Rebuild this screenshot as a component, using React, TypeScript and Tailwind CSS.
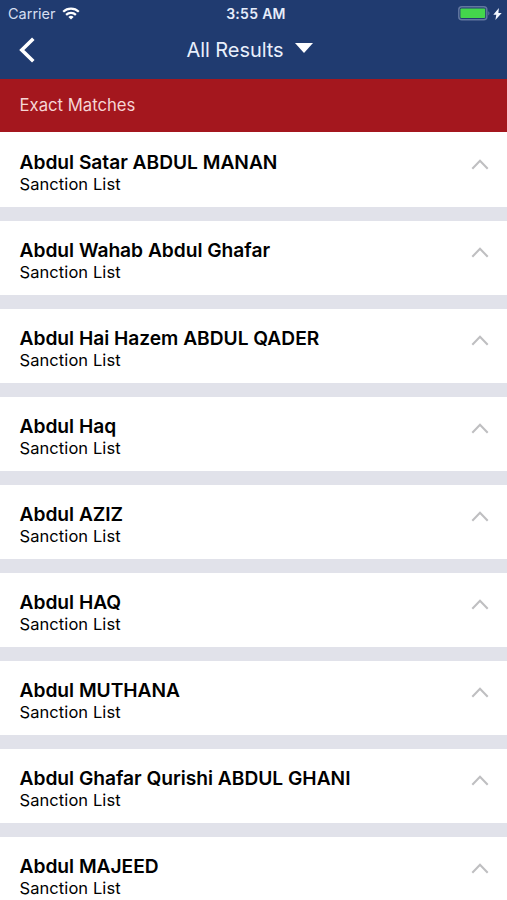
const names = [
  'Abdul Satar ABDUL MANAN',
  'Abdul Wahab Abdul Ghafar',
  'Abdul Hai Hazem ABDUL QADER',
  'Abdul Haq',
  'Abdul AZIZ',
  'Abdul HAQ',
  'Abdul MUTHANA',
  'Abdul Ghafar Qurishi ABDUL GHANI',
  'Abdul MAJEED',
];

function StatusBar() {
  return (
    <div className="grid h-[27px] grid-cols-3 items-center pl-2 pr-[5px]">
      <div className="flex items-center gap-[6px] text-[#d5def0]">
        <span className="text-[14.5px]">Carrier</span>
        <svg width="18" height="13" viewBox="0 0 18 13" fill="none" stroke="#fff" strokeWidth="2.2">
          <path d="M1.2 4.7a11.2 11.2 0 0 1 15.6 0" />
          <path d="M4.1 7.9a7 7 0 0 1 9.8 0" />
          <path d="M9 12.5 6.4 10a3.8 3.8 0 0 1 5.2 0Z" fill="#fff" stroke="none" />
        </svg>
      </div>
      <div className="pb-px pl-[2px] text-center text-[14px] font-semibold tracking-[0.3px] text-[#e6edfa]">
        3:55 AM
      </div>
      <div className="flex items-center justify-end">
        <svg width="32" height="15" viewBox="0 0 32 15">
          <rect x="0.8" y="0.8" width="28" height="13" rx="3" fill="none" stroke="#62779f" strokeWidth="1.5" />
          <rect x="2.4" y="2.6" width="24.8" height="9.4" rx="1" fill="#44d64c" />
          <path d="M30.3 5.2c1.5.6 1.5 3.6 0 4.2Z" fill="#62779f" />
        </svg>
        <svg className="ml-[3px]" width="9" height="12" viewBox="0 0 9 12">
          <path d="M5.9 0 0.3 6.7h3L2.4 12 8.7 4.9H5.4Z" fill="#f4f8ff" />
        </svg>
      </div>
    </div>
  );
}

function Row({ name }: { name: string }) {
  return (
    <li className="flex h-[88px] items-start justify-between border-b-[14px] border-[#e1e2ea] bg-white pl-[19.5px] pr-[18px] pt-[18px]">
      <div className="whitespace-nowrap text-black">
        <div className="text-[19.2px] font-semibold leading-[23px] tracking-[-0.02px]">{name}</div>
        <div className="text-[16.5px] leading-5 tracking-[0.08px]">Sanction List</div>
      </div>
      <svg className="mt-2" width="18" height="11" viewBox="0 0 18 11" fill="none" stroke="#bfbfc1" strokeWidth="2.1">
        <path d="m1.3 9.7 7.7-7.9 7.7 7.9" />
      </svg>
    </li>
  );
}

export default function App() {
  return (
    <div className="flex h-[900px] w-[507px] flex-col overflow-hidden bg-white font-['Inter',sans-serif]">
      <header className="h-[79px] shrink-0 bg-[#203b70]">
        <StatusBar />
        <div className="grid h-[46px] grid-cols-[60px_1fr_68px] items-center">
          <svg className="ml-[18px]" width="18" height="26" viewBox="0 0 18 26" fill="none" stroke="#fff" strokeWidth="3.6">
            <path d="M15.3 1.8 3.8 13l11.5 11.2" />
          </svg>
          <div className="flex items-center justify-center gap-[11px] text-[20px] text-[#e8effc]">
            <span className="tracking-[-0.07px]">All Results</span>
            <svg className="-mt-[4px]" width="18" height="10" viewBox="0 0 18 10">
              <path d="M0 0h18L9 10Z" fill="#fff" />
            </svg>
          </div>
        </div>
      </header>
      <div className="flex h-[53px] shrink-0 items-center bg-[#a4171e] pl-[19.5px] pt-px text-[16.7px] text-[#f5d5d5]">
        Exact Matches
      </div>
      <ul className="pt-px">
        {names.map((name) => (
          <Row key={name} name={name} />
        ))}
      </ul>
    </div>
  );
}
